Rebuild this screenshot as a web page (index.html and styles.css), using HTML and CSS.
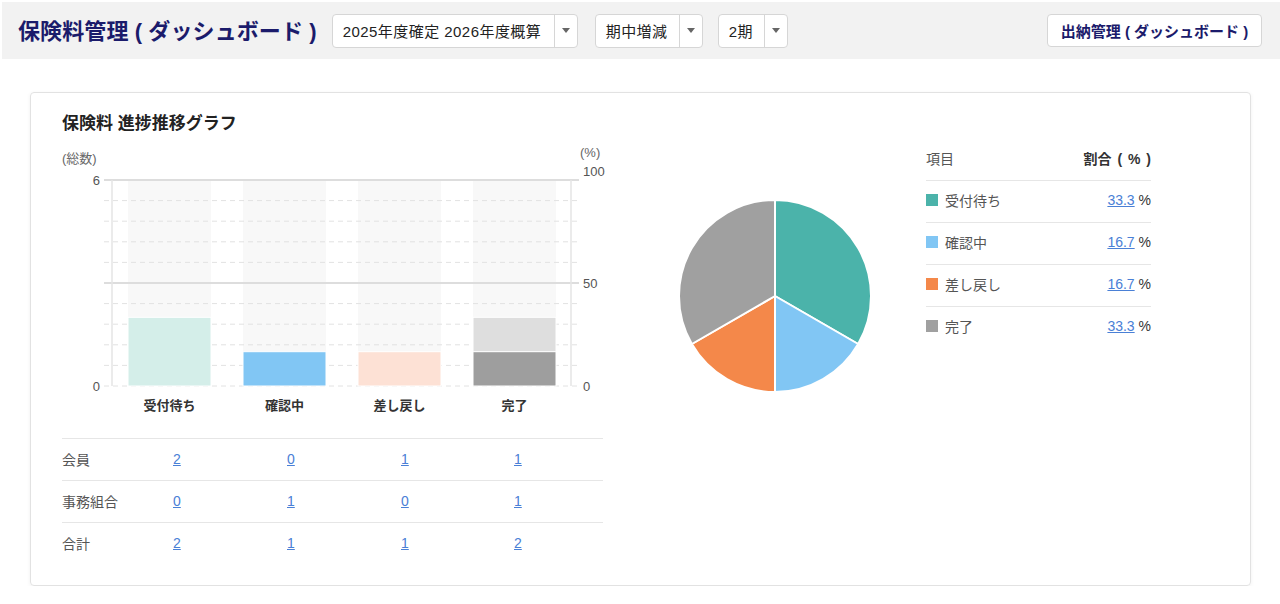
FILE: index.html
```html
<!DOCTYPE html>
<html lang="ja">
<head>
<meta charset="utf-8">
<title>保険料管理 ( ダッシュボード )</title>
<link rel="stylesheet" href="styles.css">
</head>
<body>
<div class="page">
  <header class="topbar">
    <h1 class="page-title">保険料管理 ( ダッシュボード )</h1>
    <div class="select sel-a"><span class="sel-text">2025年度確定 2026年度概算</span><span class="sel-arrow"><i></i></span></div>
    <div class="select sel-b"><span class="sel-text">期中増減</span><span class="sel-arrow"><i></i></span></div>
    <div class="select sel-c"><span class="sel-text">2期</span><span class="sel-arrow"><i></i></span></div>
    <button class="btn-nav">出納管理 ( ダッシュボード )</button>
  </header>

  <section class="card">
    <div class="chart-col">
      <h2 class="card-title">保険料 進捗推移グラフ</h2>
      <svg class="bar-chart" width="545" height="280" viewBox="0 0 545 280">
        <text x="0" y="18" class="axis-unit">(総数)</text>
        <text x="518" y="12" class="axis-unit">(%)</text>
        <!-- column backgrounds -->
        <rect x="66" y="35" width="83" height="206" fill="#f8f8f8"/>
        <rect x="181" y="35" width="83" height="206" fill="#f8f8f8"/>
        <rect x="296" y="35" width="83" height="206" fill="#f8f8f8"/>
        <rect x="411" y="35" width="83" height="206" fill="#f8f8f8"/>
        <!-- grid -->
        <g stroke="#e2e2e2" stroke-width="1" stroke-dasharray="5,4">
          <line x1="42" y1="55.6" x2="517" y2="55.6"/>
          <line x1="42" y1="76.2" x2="517" y2="76.2"/>
          <line x1="42" y1="96.8" x2="517" y2="96.8"/>
          <line x1="42" y1="117.4" x2="517" y2="117.4"/>
          <line x1="42" y1="158.6" x2="517" y2="158.6"/>
          <line x1="42" y1="179.2" x2="517" y2="179.2"/>
          <line x1="42" y1="199.8" x2="517" y2="199.8"/>
          <line x1="42" y1="220.4" x2="517" y2="220.4"/>
          <line x1="42" y1="241" x2="517" y2="241"/>
        </g>
        <g stroke="#dddddd" stroke-width="2">
          <line x1="42" y1="35" x2="517" y2="35"/>
          <line x1="42" y1="138" x2="517" y2="138"/>
        </g>
        <g stroke="#e4e4e4" stroke-width="1.5">
          <line x1="50" y1="35" x2="50" y2="241"/>
          <line x1="509" y1="35" x2="509" y2="241"/>
        </g>
        <!-- bars -->
        <rect x="66" y="172.3" width="83" height="68.7" fill="#d4eee9" stroke="#fff" stroke-width="1"/>
        <rect x="181" y="206.7" width="83" height="34.3" fill="#81c6f4" stroke="#fff" stroke-width="1"/>
        <rect x="296" y="206.7" width="83" height="34.3" fill="#fde1d5" stroke="#fff" stroke-width="1"/>
        <rect x="411" y="172.3" width="83" height="34.4" fill="#dedede" stroke="#fff" stroke-width="1"/>
        <rect x="411" y="206.7" width="83" height="34.3" fill="#9e9e9e" stroke="#fff" stroke-width="1"/>
        <!-- axis labels -->
        <text x="38" y="40" class="tick" text-anchor="end">6</text>
        <text x="38" y="246" class="tick" text-anchor="end">0</text>
        <text x="521" y="31" class="tick">100</text>
        <text x="521" y="143" class="tick">50</text>
        <text x="521" y="246" class="tick">0</text>
        <text x="107.5" y="265" class="cat" text-anchor="middle">受付待ち</text>
        <text x="222.5" y="265" class="cat" text-anchor="middle">確認中</text>
        <text x="337.5" y="265" class="cat" text-anchor="middle">差し戻し</text>
        <text x="452.5" y="265" class="cat" text-anchor="middle">完了</text>
      </svg>
      <div class="count-table">
        <div class="count-row"><span class="row-label">会員</span><a href="#">2</a><a href="#">0</a><a href="#">1</a><a href="#">1</a></div>
        <div class="count-row"><span class="row-label">事務組合</span><a href="#">0</a><a href="#">1</a><a href="#">0</a><a href="#">1</a></div>
        <div class="count-row"><span class="row-label">合計</span><a href="#">2</a><a href="#">1</a><a href="#">1</a><a href="#">2</a></div>
      </div>
    </div>

    <svg class="pie" width="200" height="200" viewBox="0 0 200 200">
      <g stroke="#fff" stroke-width="2" stroke-linejoin="round">
        <path d="M100,100 L100,4 A96,96 0 0 1 183.14,148 Z" fill="#4bb3aa"/>
        <path d="M100,100 L183.14,148 A96,96 0 0 1 100,196 Z" fill="#81c6f4"/>
        <path d="M100,100 L100,196 A96,96 0 0 1 16.86,148 Z" fill="#f4884a"/>
        <path d="M100,100 L16.86,148 A96,96 0 0 1 100,4 Z" fill="#a0a0a0"/>
      </g>
    </svg>

    <div class="legend">
      <div class="legend-head"><span>項目</span><span class="head-ratio">割合 ( % )</span></div>
      <div class="legend-row"><span class="item"><i class="sw sw-teal"></i>受付待ち</span><span class="val"><a href="#">33.3</a> %</span></div>
      <div class="legend-row"><span class="item"><i class="sw sw-blue"></i>確認中</span><span class="val"><a href="#">16.7</a> %</span></div>
      <div class="legend-row"><span class="item"><i class="sw sw-orange"></i>差し戻し</span><span class="val"><a href="#">16.7</a> %</span></div>
      <div class="legend-row"><span class="item"><i class="sw sw-gray"></i>完了</span><span class="val"><a href="#">33.3</a> %</span></div>
    </div>
  </section>
</div>
</body>
</html>
```

FILE: styles.css
```css
* { box-sizing: border-box; }
html, body {
  margin: 0;
  padding: 0;
  background: #fff;
  font-family: "Liberation Sans", "Noto Sans CJK JP", sans-serif;
  color: #333;
}
.page {
  padding: 2px 0 0 2px;
}
.topbar {
  display: flex;
  align-items: center;
  height: 57px;
  background: #f2f2f2;
  padding: 0 18px 0 16px;
}
.page-title {
  margin: 0 0 4px 0;
  font-size: 22px;
  font-weight: bold;
  color: #1b1b6b;
  white-space: nowrap;
  letter-spacing: 0.1px;
}
.select {
  display: flex;
  height: 34px;
  background: #fff;
  border: 1px solid #d6d6d6;
  border-radius: 4px;
  font-size: 15px;
  color: #222;
}
.sel-a { margin-left: 15px; }
.sel-b { margin-left: 17px; }
.sel-c { margin-left: 15px; }
.sel-text {
  display: flex;
  align-items: center;
  padding-left: 10px;
  white-space: nowrap;
  letter-spacing: 0.45px;
}
.sel-a .sel-text { width: 221px; }
.sel-b .sel-text { width: 83px; }
.sel-c .sel-text { width: 45px; }
.sel-arrow {
  width: 23px;
  border-left: 1px solid #d6d6d6;
  display: flex;
  align-items: center;
  justify-content: center;
}
.sel-arrow i {
  width: 0;
  height: 0;
  border-left: 4.5px solid transparent;
  border-right: 4.5px solid transparent;
  border-top: 5px solid #666;
}
.btn-nav {
  margin-left: auto;
  width: 215px;
  height: 33px;
  background: #fff;
  border: 1px solid #d6d6d6;
  border-radius: 4px;
  font-family: inherit;
  font-size: 15px;
  font-weight: bold;
  color: #1b1b6b;
  padding: 0;
  white-space: nowrap;
}
.card {
  margin: 33px 0 0 28px;
  width: 1221px;
  height: 494px;
  border: 1px solid #e2e2e2;
  border-radius: 4px;
  box-shadow: 0 1px 4px rgba(0, 0, 0, 0.06);
  padding: 20px 31px;
  display: flex;
  align-items: flex-start;
}
.chart-col {
  width: 541px;
  flex: none;
}
.card-title {
  margin: 0;
  font-size: 17px;
  line-height: 22px;
  font-weight: bold;
  color: #222;
}
.bar-chart {
  display: block;
  margin-top: 10px;
  overflow: visible;
}
.axis-unit {
  font-size: 13px;
  fill: #666;
  font-family: "Liberation Sans", "Noto Sans CJK JP", sans-serif;
}
.tick {
  font-size: 13px;
  fill: #555;
  font-family: "Liberation Sans", sans-serif;
}
.cat {
  font-size: 13px;
  font-weight: bold;
  fill: #333;
  font-family: "Liberation Sans", "Noto Sans CJK JP", sans-serif;
}
.count-table {
  margin-top: 13px;
}
.count-row {
  display: grid;
  grid-template-columns: 111px 114px 114px 113px 1fr;
  align-items: center;
  height: 42px;
  border-top: 1px solid #e6e6e6;
  font-size: 14px;
  padding-bottom: 2px;
}
.row-label { color: #555; }
.count-row a,
.legend a {
  color: #4a80d6;
  text-decoration: underline;
}
.pie {
  display: block;
  flex: none;
  margin: 83px 0 0 72px;
}
.legend {
  flex: none;
  width: 225px;
  margin: 25px 0 0 51px;
  font-size: 14px;
}
.legend-head,
.legend-row {
  display: flex;
  align-items: center;
  justify-content: space-between;
  height: 42px;
  padding-bottom: 3px;
}
.legend-head {
  color: #555;
}
.head-ratio {
  font-weight: bold;
  color: #333;
  word-spacing: 2px;
}
.legend-row {
  border-top: 1px solid #e6e6e6;
}
.item {
  display: flex;
  align-items: center;
  color: #555;
}
.sw {
  width: 12px;
  height: 12px;
  margin-right: 7px;
}
.sw-teal { background: #4bb3aa; }
.sw-blue { background: #81c6f4; }
.sw-orange { background: #f4884a; }
.sw-gray { background: #a0a0a0; }
.val { color: #333; }
```
